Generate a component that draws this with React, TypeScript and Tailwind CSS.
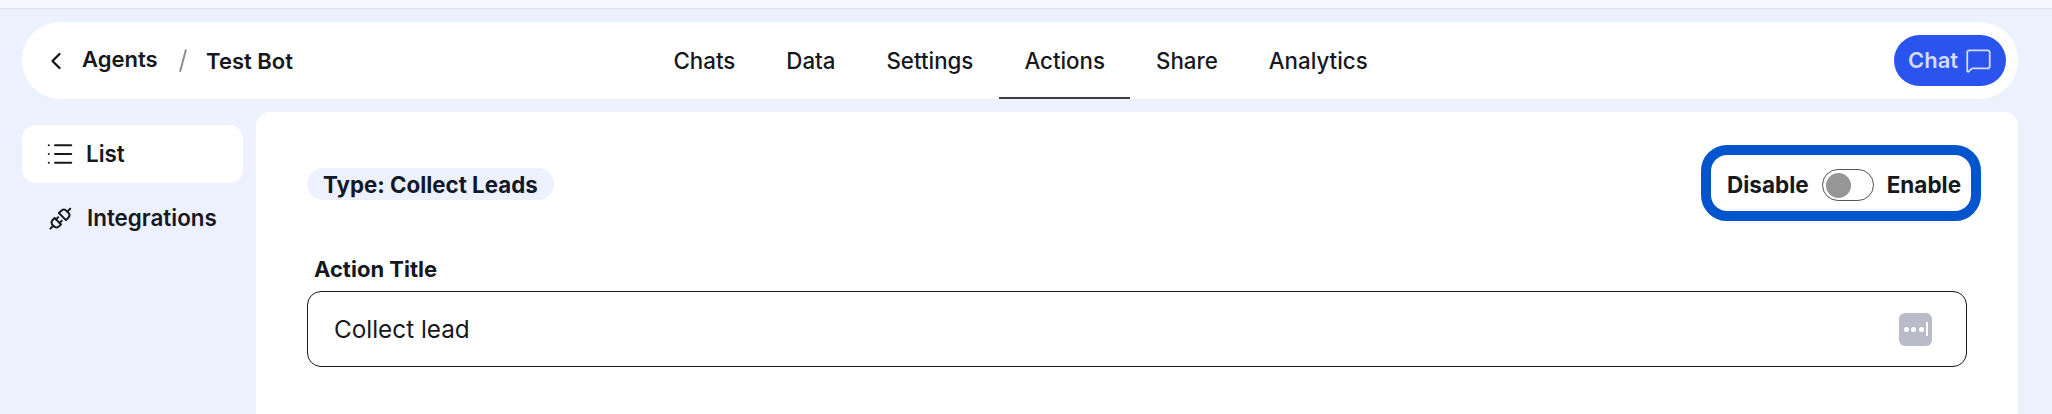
import React from 'react';
import { ChevronLeft, List, MessageSquare } from 'lucide-react';

const tabs = ['Chats', 'Data', 'Settings', 'Actions', 'Share', 'Analytics'];

const PlugIcon = () => (
    <svg width="26" height="26" viewBox="0 0 26 26" fill="none" stroke="currentColor" strokeWidth="2" strokeLinejoin="round" strokeLinecap="round">
        <g transform="rotate(-45 13 13)">
            <path d="M-2 13 H2" />
            <path d="M2 13 Q2 8.5 6 8.5 H8.5 V17.5 H6 Q2 17.5 2 13 Z" />
            <path d="M8.5 10.5 H11.5 M8.5 15.5 H11.5" />
            <path d="M15 8 H18 Q22 8 22 12 V14 Q22 18 18 18 H15 Z" />
            <path d="M22 13 H26" />
        </g>
    </svg>
);

const App: React.FC = () => {
    return (
        <div className="h-[414px] overflow-hidden bg-[#ecf1fd] font-['Inter',sans-serif] text-[#16181d]">
            <div className="h-[9px] bg-[#f7f8fe] border-b border-[#dfe3ee]" />
            <div className="pl-[22px] pr-[34px] pt-[13px]">
                <header className="relative flex h-[77px] items-center justify-between rounded-[38px] bg-white pl-[20px] pr-[12px]">
                    <div className="flex items-center">
                        <ChevronLeft className="h-[28px] w-[28px]" strokeWidth={2} />
                        <span className="ml-[12px] text-[22px] font-semibold -mt-[2px]">Agents</span>
                        <span className="ml-[24px] h-[23px] w-[1.5px] rotate-[15deg] bg-[#8d8d8d]" />
                        <span className="ml-[23px] text-[22px] font-semibold mt-[2px]">Test Bot</span>
                    </div>
                    <nav className="absolute left-[626px] top-0 flex h-[77px]">
                        {tabs.map(tab => (
                            <div
                                key={tab}
                                className={
                                    tab === 'Actions'
                                        ? 'flex items-center px-[25.5px] pt-[3px] text-[22.3px] font-medium border-b-2 border-[#3b3d44]'
                                        : 'flex items-center px-[25.5px] text-[22.3px] font-medium'
                                }
                            >
                                {tab}
                            </div>
                        ))}
                    </nav>
                    <button className="flex h-[51px] w-[112px] items-center justify-center gap-[7px] rounded-full bg-[#2b53ed] text-[22px] font-semibold text-[#d3dcfb]">
                        Chat
                        <MessageSquare className="h-[27px] w-[27px]" strokeWidth={1.6} />
                    </button>
                </header>

                <div className="mt-[13px] flex">
                    <aside className="w-[234px] shrink-0 pt-[13px]">
                        <div className="flex h-[58px] w-[221px] items-center gap-[11px] rounded-[14px] bg-white pl-[23px] text-[22.4px] font-semibold">
                            <List className="h-[30px] w-[30px]" strokeWidth={1.6} />
                            List
                        </div>
                        <div className="mt-[6px] flex h-[58px] w-[221px] items-center gap-[13px] pl-[26px] text-[22.4px] font-semibold">
                            <PlugIcon />
                            Integrations
                        </div>
                    </aside>

                    <main className="h-[340px] flex-1 rounded-[14px] bg-white pl-[51px] pr-[51px] pt-[33px]">
                        <div className="flex items-center justify-between">
                            <span className="mt-[2px] flex h-[32px] items-center rounded-full bg-[#ecf1fd] px-[16px] pt-[1px] text-[22.3px] font-bold text-[#111827]">
                                Type: Collect Leads
                            </span>
                            <div className="-mr-[14px] flex h-[76px] w-[280px] items-center justify-center gap-[13px] rounded-[26px] border-[10px] border-[#0055cc] pl-[6px] pt-[4px] text-[22.5px] font-bold">
                                Disable
                                <span className="flex h-[32px] w-[52px] shrink-0 items-center rounded-full border border-[#55565a] pl-[3px]">
                                    <span className="h-[25px] w-[25px] rounded-full bg-[#969696]" />
                                </span>
                                Enable
                            </div>
                        </div>
                        <label className="mt-[36px] block pl-[7px] text-[22px] font-bold leading-[24px]">Action Title</label>
                        <div className="mt-[10px] flex h-[76px] items-center justify-between rounded-[14px] border border-[#16181d] pl-[26px] pr-[34px] text-[24.3px]">
                            Collect lead
                            <span className="flex h-[33px] w-[33px] items-center justify-center gap-[2.5px] rounded-[6px] bg-[#b9bcc8]">
                                <span className="h-[5px] w-[5px] rounded-full bg-white" />
                                <span className="h-[5px] w-[5px] rounded-full bg-white" />
                                <span className="h-[5px] w-[5px] rounded-full bg-white" />
                                <span className="h-[14px] w-[1.5px] bg-white" />
                            </span>
                        </div>
                    </main>
                </div>
            </div>
        </div>
    );
};

export default App;
